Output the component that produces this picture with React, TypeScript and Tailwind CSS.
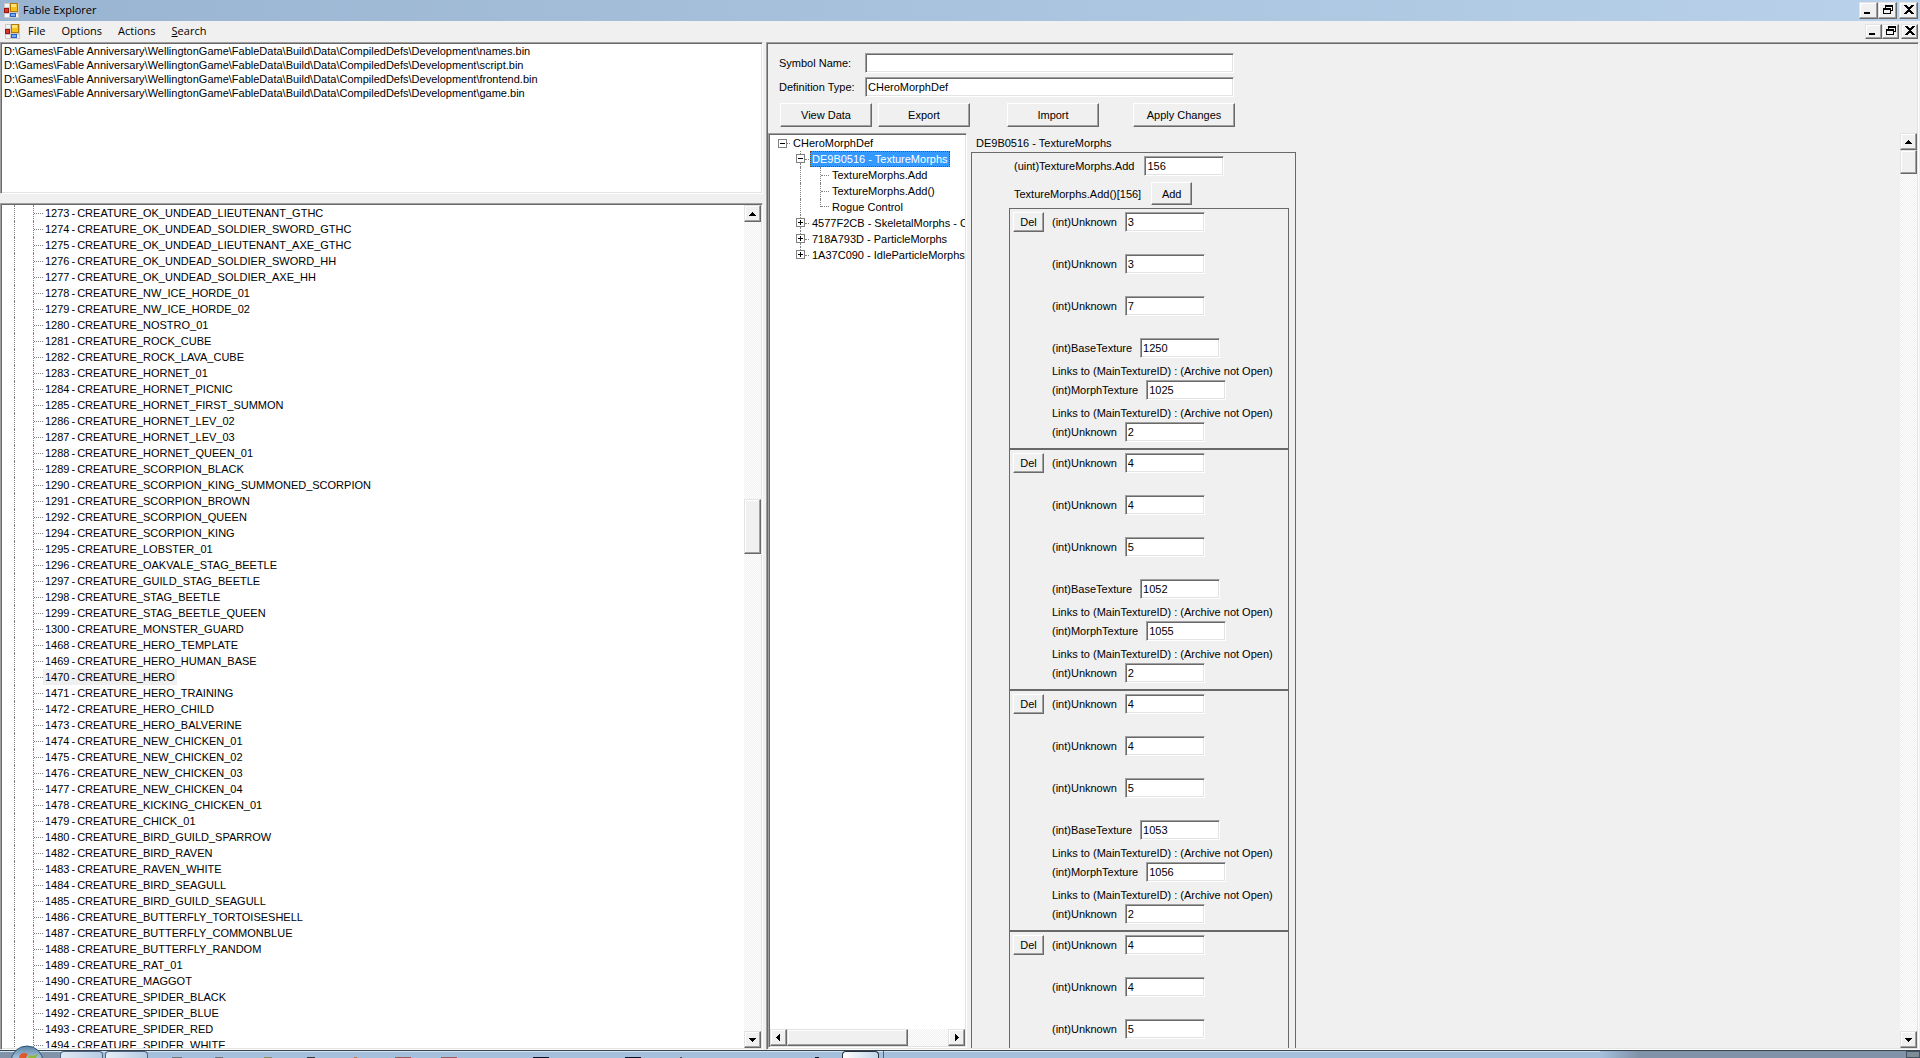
import type { ReactNode } from 'react';

const SUNKEN =
  'border border-t-[#a0a0a0] border-l-[#a0a0a0] border-b-white border-r-white shadow-[inset_1px_1px_#696969,inset_-1px_-1px_#e3e3e3]';
const RAISED =
  'border border-t-white border-l-white border-b-[#696969] border-r-[#696969] shadow-[inset_-1px_-1px_#a0a0a0] bg-[#f0f0f0]';
const SCROLL =
  'border border-t-[#e3e3e3] border-l-[#e3e3e3] border-b-[#696969] border-r-[#696969] shadow-[inset_-1px_-1px_#a0a0a0,inset_1px_1px_#fff] bg-[#f0f0f0]';
const TRACK = 'bg-[repeating-conic-gradient(#ffffff_0_25%,#f0f0f0_0_50%)] bg-[length:2px_2px]';

const FILES = ['names.bin', 'script.bin', 'frontend.bin', 'game.bin'];
const FOLDER = 'D:\\Games\\Fable Anniversary\\WellingtonGame\\FableData\\Build\\Data\\CompiledDefs\\Development\\';

const CREATURES: [number, string][] = [
  [1273, 'OK_UNDEAD_LIEUTENANT_GTHC'],
  [1274, 'OK_UNDEAD_SOLDIER_SWORD_GTHC'],
  [1275, 'OK_UNDEAD_LIEUTENANT_AXE_GTHC'],
  [1276, 'OK_UNDEAD_SOLDIER_SWORD_HH'],
  [1277, 'OK_UNDEAD_SOLDIER_AXE_HH'],
  [1278, 'NW_ICE_HORDE_01'],
  [1279, 'NW_ICE_HORDE_02'],
  [1280, 'NOSTRO_01'],
  [1281, 'ROCK_CUBE'],
  [1282, 'ROCK_LAVA_CUBE'],
  [1283, 'HORNET_01'],
  [1284, 'HORNET_PICNIC'],
  [1285, 'HORNET_FIRST_SUMMON'],
  [1286, 'HORNET_LEV_02'],
  [1287, 'HORNET_LEV_03'],
  [1288, 'HORNET_QUEEN_01'],
  [1289, 'SCORPION_BLACK'],
  [1290, 'SCORPION_KING_SUMMONED_SCORPION'],
  [1291, 'SCORPION_BROWN'],
  [1292, 'SCORPION_QUEEN'],
  [1294, 'SCORPION_KING'],
  [1295, 'LOBSTER_01'],
  [1296, 'OAKVALE_STAG_BEETLE'],
  [1297, 'GUILD_STAG_BEETLE'],
  [1298, 'STAG_BEETLE'],
  [1299, 'STAG_BEETLE_QUEEN'],
  [1300, 'MONSTER_GUARD'],
  [1468, 'HERO_TEMPLATE'],
  [1469, 'HERO_HUMAN_BASE'],
  [1470, 'HERO'],
  [1471, 'HERO_TRAINING'],
  [1472, 'HERO_CHILD'],
  [1473, 'HERO_BALVERINE'],
  [1474, 'NEW_CHICKEN_01'],
  [1475, 'NEW_CHICKEN_02'],
  [1476, 'NEW_CHICKEN_03'],
  [1477, 'NEW_CHICKEN_04'],
  [1478, 'KICKING_CHICKEN_01'],
  [1479, 'CHICK_01'],
  [1480, 'BIRD_GUILD_SPARROW'],
  [1482, 'BIRD_RAVEN'],
  [1483, 'RAVEN_WHITE'],
  [1484, 'BIRD_SEAGULL'],
  [1485, 'BIRD_GUILD_SEAGULL'],
  [1486, 'BUTTERFLY_TORTOISESHELL'],
  [1487, 'BUTTERFLY_COMMONBLUE'],
  [1488, 'BUTTERFLY_RANDOM'],
  [1489, 'RAT_01'],
  [1490, 'MAGGOT'],
  [1491, 'SPIDER_BLACK'],
  [1492, 'SPIDER_BLUE'],
  [1493, 'SPIDER_RED'],
  [1494, 'SPIDER_WHITE'],
];

type Morph = { unknowns: string[]; base?: string; morph?: string; last?: string };
const MORPHS: Morph[] = [
  { unknowns: ['3', '3', '7'], base: '1250', morph: '1025', last: '2' },
  { unknowns: ['4', '4', '5'], base: '1052', morph: '1055', last: '2' },
  { unknowns: ['4', '4', '5'], base: '1053', morph: '1056', last: '2' },
  { unknowns: ['4', '4', '5'] },
];

function AppIcon() {
  return (
    <svg width="15" height="15" viewBox="0 0 15 15" aria-hidden="true" className="shrink-0" shapeRendering="crispEdges">
      <rect width="15" height="15" fill="#c9c9c9" />
      <rect x="1" y="1" width="4" height="3" fill="#f4f4f4" />
      <rect x="1" y="11" width="4" height="3" fill="#f4f4f4" />
      <rect x="12" y="11" width="2" height="3" fill="#f4f4f4" />
      <rect x="0" y="5" width="5" height="5" fill="#9c1410" />
      <rect x="1" y="6" width="3" height="3" fill="#d8372b" />
      <rect x="6" y="0" width="8" height="9" fill="#b07a06" />
      <rect x="7" y="1" width="6" height="7" fill="#f6c11d" />
      <rect x="7" y="1" width="5" height="3" fill="#ffe27a" />
      <rect x="6" y="10" width="6" height="4" fill="#2b5fc4" />
      <rect x="7" y="11" width="4" height="2" fill="#79a9f2" />
    </svg>
  );
}

function WindowButtons({ small = false }: { small?: boolean }) {
  const size = small ? 'w-[17px] h-[15px]' : 'w-[19px] h-[17px]';
  const cell = `${SCROLL} ${size} flex items-center justify-center pb-0.5`;
  return (
    <div className="flex">
      <button aria-label="Minimize" className={cell}>
        <svg width="9" height="9" viewBox="0 0 9 9" shapeRendering="crispEdges">
          <rect x="0" y="7" width="6" height="2" />
        </svg>
      </button>
      <button aria-label="Restore" className={cell}>
        <svg width="10" height="9" viewBox="0 0 10 9" shapeRendering="crispEdges">
          <path d="M2 0h8v6H7V5h2V2H3v1H2z" />
          <path fillRule="evenodd" d="M0 3h8v6H0zM1 5v3h6V5z" />
        </svg>
      </button>
      <button aria-label="Close" className={`${cell} ml-0.5`}>
        <svg width="10" height="9" viewBox="0 0 10 9" shapeRendering="crispEdges">
          <path d="M0 0h3v1h1v1h2V1h1V0h3v1H9v1H8v1H7v1H6v1h1v1h1v1h1v1h1v1H7V8H6V7H4v1H3v1H0V8h1V7h1V6h1V5h1V4H3V3H2V2H1V1H0z" />
        </svg>
      </button>
    </div>
  );
}

type Dir = 'up' | 'down' | 'left' | 'right';
const ARROWS: Record<Dir, string> = {
  up: 'M3 2h1v1h1v1h1v1h1v1H0V5h1V4h1V3h1z',
  down: 'M0 2h7v1H6v1H5v1H4v1H3V5H2V4H1V3H0z',
  left: 'M5 0v7H4V6H3V5H2V4H1V3h1V2h1V1h1V0z',
  right: 'M2 0v7h1V6h1V5h1V4h1V3H5V2H4V1H3V0z',
};

function ArrowButton({ dir }: { dir: Dir }) {
  return (
    <button aria-label={`Scroll ${dir}`} className={`${SCROLL} flex size-[17px] shrink-0 items-center justify-center`}>
      <svg width="7" height="7" viewBox="0 0 7 7" shapeRendering="crispEdges">
        <path d={ARROWS[dir]} />
      </svg>
    </button>
  );
}

function PushButton({ children, className }: { children: ReactNode; className: string }) {
  return <button className={`${RAISED} flex items-center justify-center whitespace-nowrap ${className}`}>{children}</button>;
}

function Field({ label, value, gap = 'gap-2' }: { label: string; value: string; gap?: string }) {
  return (
    <label className={`flex h-5 items-center whitespace-nowrap ${gap}`}>
      {label}
      <input defaultValue={value} className={`${SUNKEN} h-5 w-20 bg-white px-0.5`} />
    </label>
  );
}

function Expander({ open = false }: { open?: boolean }) {
  return (
    <svg width="9" height="9" viewBox="0 0 9 9" aria-hidden="true" className="shrink-0" shapeRendering="crispEdges">
      <rect width="9" height="9" fill="#808080" />
      <rect x="1" y="1" width="7" height="7" fill="#fff" />
      <rect x="2" y="4" width="5" height="1" />
      {!open && <rect x="4" y="2" width="1" height="5" />}
    </svg>
  );
}

function Branch({ children, open = false, last = false }: { children: ReactNode; open?: boolean; last?: boolean }) {
  return (
    <li className="flex h-4 items-center pl-[26px]">
      <span className="flex h-4 w-[9px] shrink-0 flex-col items-center">
        <span className="h-[3px] w-px border-l border-dotted border-[#808080]" />
        <Expander open={open} />
        {!last && <span className="h-1 w-px border-l border-dotted border-[#808080]" />}
      </span>
      <span className="mr-px w-1 shrink-0 border-t border-dotted border-[#808080]" />
      {children}
    </li>
  );
}

function Leaf({ label, last = false }: { label: string; last?: boolean }) {
  return (
    <li className="flex h-4 pl-[30px]">
      <span className="w-5 border-l border-dotted border-[#808080]" />
      <span className={`flex border-l border-dotted border-[#808080] ${last ? 'h-2 items-end' : 'h-4 items-center'}`}>
        <span className="w-2 border-t border-dotted border-[#808080]" />
      </span>
      <span className="pl-[3px]">{label}</span>
    </li>
  );
}

function MorphGroup({ m }: { m: Morph }) {
  return (
    <section className="flex h-[241px] w-[280px] shrink-0 items-start border border-[#696969] pt-[3px] pl-[3px]">
      <PushButton className="h-5 w-[31px]">Del</PushButton>
      <div className="ml-2">
        {m.unknowns.map((v, i) => (
          <div key={i} className="h-[42px]">
            <Field label="(int)Unknown" value={v} />
          </div>
        ))}
        {m.base && (
          <>
            <div className="h-[42px]">
              <Field label="(int)BaseTexture" value={m.base} />
              <p className="mt-[5px] leading-4 whitespace-nowrap">Links to (MainTextureID) : (Archive not Open)</p>
            </div>
            <div className="h-[42px]">
              <Field label="(int)MorphTexture" value={m.morph ?? ''} />
              <p className="mt-[5px] leading-4 whitespace-nowrap">Links to (MainTextureID) : (Archive not Open)</p>
            </div>
            <Field label="(int)Unknown" value={m.last ?? ''} />
          </>
        )}
      </div>
    </section>
  );
}

function LeftPane() {
  return (
    <div className="flex w-[763px] shrink-0 flex-col">
      <ul className={`${SUNKEN} h-[152px] shrink-0 bg-white px-[3px] pt-px`}>
        {FILES.map((f) => (
          <li key={f} className="h-3.5 leading-[14px] whitespace-nowrap">
            {FOLDER + f}
          </li>
        ))}
      </ul>
      <div className={`${SUNKEN} mt-[9px] flex min-h-0 flex-1 bg-white p-px`}>
        <ul className="min-w-0 flex-1 overflow-hidden">
          {CREATURES.map(([id, name]) => (
            <li key={id} className="flex h-4 items-center pl-3">
              <span className="h-4 w-[19px] border-l border-dotted border-[#808080]" />
              <span className="flex h-4 w-2.5 items-center border-l border-dotted border-[#808080]">
                <span className="w-full border-t border-dotted border-[#808080]" />
              </span>
              <span
                className={`flex h-4 gap-0.5 px-0.5 leading-4 whitespace-nowrap ${id === 1470 ? 'bg-[#f0f0f0]' : ''}`}
              >
                <span>{id}</span>
                <span>-</span>
                <span>CREATURE_{name}</span>
              </span>
            </li>
          ))}
        </ul>
        <div className={`${TRACK} flex w-[17px] shrink-0 flex-col`}>
          <ArrowButton dir="up" />
          <div className="grow-[277]" />
          <div className={`${SCROLL} h-[55px]`} />
          <div className="grow-[477]" />
          <ArrowButton dir="down" />
        </div>
      </div>
    </div>
  );
}

function DefinitionTree() {
  return (
    <div className={`${SUNKEN} flex w-[199px] shrink-0 flex-col bg-white p-px`}>
      <ul className="min-h-0 flex-1 overflow-hidden leading-4 whitespace-nowrap">
        <li className="flex h-4 items-center pl-2">
          <Expander open />
          <span className="mr-[3px] w-[3px] border-t border-dotted border-[#808080]" />
          CHeroMorphDef
        </li>
        <Branch open>
          <span className="h-4 bg-[#3399ff] px-0.5 text-white outline outline-dotted -outline-offset-1 outline-[#7a4a10]">
            DE9B0516 - TextureMorphs
          </span>
        </Branch>
        <Leaf label="TextureMorphs.Add" />
        <Leaf label="TextureMorphs.Add()" />
        <Leaf label="Rogue Control" last />
        <Branch>
          <span className="pl-0.5">4577F2CB - SkeletalMorphs - CHeroSkeletalMorphs</span>
        </Branch>
        <Branch>
          <span className="pl-0.5">718A793D - ParticleMorphs</span>
        </Branch>
        <Branch last>
          <span className="pl-0.5">1A37C090 - IdleParticleMorphs</span>
        </Branch>
      </ul>
      <div className={`${TRACK} flex shrink-0`}>
        <ArrowButton dir="left" />
        <div className={`${SCROLL} w-[121px]`} />
        <div className="flex-1" />
        <ArrowButton dir="right" />
      </div>
    </div>
  );
}

function RightPane() {
  return (
    <div className={`${SUNKEN} ml-[3px] mr-px flex min-w-0 flex-1 flex-col p-px`}>
      <div className="flex h-[89px] shrink-0 flex-col pt-[9px] pl-[11px]">
        <label className="flex h-5 items-center">
          <span className="w-[86px]">Symbol Name:</span>
          <input className={`${SUNKEN} h-5 w-[369px] bg-white px-0.5`} />
        </label>
        <label className="mt-1 flex h-5 items-center">
          <span className="w-[86px]">Definition Type:</span>
          <input defaultValue="CHeroMorphDef" className={`${SUNKEN} h-5 w-[369px] bg-white px-0.5`} />
        </label>
        <div className="mt-1.5 ml-px flex">
          <PushButton className="h-6 w-[92px]">View Data</PushButton>
          <PushButton className="ml-1.5 h-6 w-[92px]">Export</PushButton>
          <PushButton className="ml-[37px] h-6 w-[92px]">Import</PushButton>
          <PushButton className="ml-[34px] h-6 w-[102px]">Apply Changes</PushButton>
        </div>
      </div>
      <div className="flex min-h-0 flex-1">
        <DefinitionTree />
        <div className="ml-1 flex min-w-0 flex-1 flex-col overflow-hidden">
          <h2 className="h-[19px] shrink-0 pl-[5px] leading-5">DE9B0516 - TextureMorphs</h2>
          <div className="flex min-h-0 w-[325px] flex-1 flex-col overflow-hidden border border-b-0 border-[#696969] pt-[3px] pl-[37px]">
            <div className="ml-[5px] shrink-0">
              <Field label="(uint)TextureMorphs.Add" value="156" gap="gap-2.5" />
            </div>
            <div className="mt-1.5 mb-[3px] ml-[5px] flex h-[23px] shrink-0 items-center gap-2.5 whitespace-nowrap">
              TextureMorphs.Add()[156]
              <PushButton className="h-[23px] w-[41px]">Add</PushButton>
            </div>
            {MORPHS.map((m, i) => (
              <MorphGroup key={i} m={m} />
            ))}
          </div>
        </div>
        <div className={`${TRACK} flex w-[17px] shrink-0 flex-col`}>
          <ArrowButton dir="up" />
          <div className={`${SCROLL} h-6`} />
          <div className="flex-1" />
          <ArrowButton dir="down" />
        </div>
      </div>
    </div>
  );
}

function Taskbar() {
  return (
    <footer className="relative flex h-2 shrink-0 items-stretch border-t border-[#36424e] bg-linear-to-r from-[#8093a9] from-[3%] via-[#a5c0dd] via-[5%] to-[#a5c0dd] shadow-[inset_0_1px_#d4e3f0]">
      <svg width="34" height="13" viewBox="0 0 34 13" className="absolute bottom-0 left-2.5" aria-label="Start">
        <defs>
          <linearGradient id="orb" x1="0" y1="0" x2="0" y2="1">
            <stop offset="0" stopColor="#5c83a6" />
            <stop offset="0.4" stopColor="#a9c6dc" />
            <stop offset="1" stopColor="#5f8db5" />
          </linearGradient>
        </defs>
        <circle cx="17" cy="17" r="16" fill="url(#orb)" stroke="#2d5475" />
        <path d="M9 13c1-5 4-6 9-4l-2 4z" fill="#e2582a" />
        <path d="M19 10c3 1 6 1 9-1l-2 4h-8z" fill="#8dbb3c" />
      </svg>
      <span className="ml-[60px] w-[43px] rounded-t-sm border border-b-0 border-[#4c6480] bg-linear-to-r from-[#dfe8f2] to-[#b7cce3]" />
      <span className="ml-0.5 w-[43px] rounded-t-sm border border-b-0 border-[#4c6480] bg-linear-to-r from-[#e6eef7] to-[#b7cce3]" />
      <svg width="694" height="7" viewBox="0 0 694 7" aria-hidden="true" className="shrink-0">
        <path d="M24 6h10v1H24zM67 6h8v1h-8z" fill="#6e7478" />
        <path d="M116 6h8v1h-8z" fill="#8b8a5a" />
        <path d="M159 6h8v1h-8z" fill="#30343c" />
        <path d="M206 6h3v1h-3z" fill="#e06a3c" />
        <path d="M247 6h16v1h-16zM293 6h16v1h-16z" fill="#a05a5c" />
        <path d="M385 6h16v1h-16zM477 6h16v1h-16z" fill="#0b1228" />
        <path d="M532 6h2v1h-2z" fill="#4b5560" />
        <path d="M667 6h4v1h-4z" fill="#0b1228" />
      </svg>
      <span className="w-[37px] rounded-t-sm border border-b-0 border-[#26303a] bg-linear-to-r from-white to-[#c3d6ea]" />
      <span className="ml-1 w-1 border-l border-[#4c6480]" />
      <span className="ml-auto w-[320px] bg-linear-to-r from-[#a5c0dd] to-[#8093a9] to-[12%]" />
      <span className="absolute right-0 h-full w-[14px] border border-[#43525f] bg-[#7f8c98]" />
    </footer>
  );
}

export default function App() {
  return (
    <div className="flex h-screen flex-col overflow-hidden bg-[#f0f0f0] font-['Liberation_Sans',Arial,sans-serif] text-[11px] leading-4 text-black">
      <header className="flex h-[21px] shrink-0 items-center bg-linear-to-r from-[#99b4d1] to-[#b9d1ea] pr-0.5 pl-1 font-['Open_Sans',sans-serif]">
        <AppIcon />
        <h1 className="ml-1 flex-1 pb-0.5">Fable Explorer</h1>
        <WindowButtons />
      </header>
      <nav className="flex h-[21px] shrink-0 items-center pr-0.5 pl-[5px] font-['Open_Sans',sans-serif]">
        <AppIcon />
        <div className="flex flex-1 gap-4 pb-0.5 pl-2">
          <button>File</button>
          <button>Options</button>
          <button>Actions</button>
          <button>
            <u>S</u>earch
          </button>
        </div>
        <WindowButtons small />
      </nav>
      <main className="flex min-h-0 flex-1">
        <LeftPane />
        <RightPane />
      </main>
      <Taskbar />
    </div>
  );
}
